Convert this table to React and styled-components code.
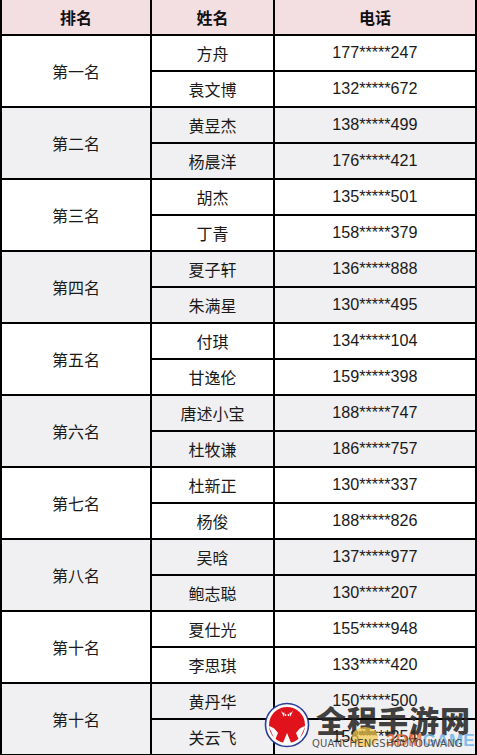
import React from "react";
import styled, { createGlobalStyle } from "styled-components";

const GlobalStyle = createGlobalStyle`
  html, body {
    margin: 0;
    padding: 0;
    background: #ffffff;
  }
  body {
    font-family: "Noto Sans CJK SC", "Noto Sans", sans-serif;
  }
`;

const Page = styled.div`
  position: relative;
  width: 477px;
  height: 755px;
  overflow: hidden;
`;

const Table = styled.div`
  display: grid;
  grid-template-columns: 148px 121px 200px;
  grid-auto-rows: 34px;
  gap: 2px;
  padding: 0 2px 2px;
  background: #000;
`;

const HeadCell = styled.div`
  display: flex;
  align-items: center;
  justify-content: center;
  background: #f3dee2;
  font-family: "Noto Sans CJK SC", sans-serif;
  font-weight: 700;
  font-size: 16px;
  color: #111;
`;

const Cell = styled.div`
  display: flex;
  align-items: center;
  justify-content: center;
  background: ${(p) => (p.$shade ? "#f0eff1" : "#ffffff")};
  font-family: "Noto Sans CJK SC", sans-serif;
  font-size: 16px;
  color: #1a1a1a;
`;

const RankCell = styled(Cell)`
  grid-row: span 2;
`;

const Phone = styled.span`
  display: inline-block;
  font-family: "Liberation Sans", Arial, sans-serif;
  font-size: 17px;
  color: #1a1a1a;
  transform: scaleX(0.95);
`;

const Watermark = styled.div`
  position: absolute;
  left: 262px;
  top: 700px;
  width: 215px;
  height: 55px;
  pointer-events: none;
`;

const Logo = styled.svg`
  position: absolute;
  left: 2px;
  top: 2px;
`;

const Brand = styled.div`
  position: absolute;
  left: 54px;
  top: 0px;
  font-family: "Noto Sans CJK SC", sans-serif;
  font-weight: 900;
  font-size: 30px;
  letter-spacing: 1px;
  color: rgba(40, 40, 40, 0.9);
  line-height: 38px;
`;

const Pinyin = styled.div`
  position: absolute;
  left: 50px;
  top: 38px;
  font-family: "DejaVu Sans", sans-serif;
  font-size: 10px;
  letter-spacing: 0.2px;
  color: rgba(50, 50, 50, 0.85);
`;

const Game = styled.div`
  position: absolute;
  left: 124px;
  top: 31px;
  font-family: "Liberation Sans", Arial, sans-serif;
  font-weight: 700;
  font-size: 17px;
  letter-spacing: 0.3px;
  color: rgba(100, 175, 230, 0.8);
  span {
    color: rgba(235, 105, 55, 0.8);
  }
`;

const Blob = styled.div`
  position: absolute;
  left: 90px;
  top: 27px;
  width: 26px;
  height: 20px;
  border-radius: 50%;
  background: rgba(245, 200, 70, 0.7);
`;

const groups = [
  ["第一名", [["方舟", "177*****247"], ["袁文博", "132*****672"]]],
  ["第二名", [["黄昱杰", "138*****499"], ["杨晨洋", "176*****421"]]],
  ["第三名", [["胡杰", "135*****501"], ["丁青", "158*****379"]]],
  ["第四名", [["夏子轩", "136*****888"], ["朱满星", "130*****495"]]],
  ["第五名", [["付琪", "134*****104"], ["甘逸伦", "159*****398"]]],
  ["第六名", [["唐述小宝", "188*****747"], ["杜牧谦", "186*****757"]]],
  ["第七名", [["杜新正", "130*****337"], ["杨俊", "188*****826"]]],
  ["第八名", [["吴晗", "137*****977"], ["鲍志聪", "130*****207"]]],
  ["第十名", [["夏仕光", "155*****948"], ["李思琪", "133*****420"]]],
  ["第十名", [["黄丹华", "150*****500"], ["关云飞", "158*****254"]]],
];

const LogoMark = () => (
  <Logo width="46" height="46" viewBox="0 0 46 46">
    <circle cx="23" cy="23" r="21.5" fill="#fff" stroke="#2a3e9c" strokeWidth="1.6" />
    <circle cx="23" cy="23" r="18" fill="#e0121c" />
    <path d="M23 31 L18.5 42 L27.5 42 Z" fill="#fff" />
    <path d="M15 5 Q18 12 20.5 10.5 L20 15 Z" fill="#fff" />
    <path d="M31 5 Q28 12 25.5 10.5 L26 15 Z" fill="#fff" />
    <path d="M4.5 24 Q10 25 14 31 L11 38 Z" fill="#fff" />
    <path d="M41.5 24 Q36 25 32 31 L35 38 Z" fill="#fff" />
    <circle cx="21.5" cy="13" r="0.9" fill="#fff" />
    <circle cx="24.5" cy="13" r="0.9" fill="#fff" />
  </Logo>
);

export default function App() {
  return (
    <>
      <GlobalStyle />
      <Page>
        <Table>
          <HeadCell>排名</HeadCell>
          <HeadCell>姓名</HeadCell>
          <HeadCell>电话</HeadCell>
          {groups.map(([rank, rows], i) => {
            const shade = i % 2 === 1;
            return (
              <React.Fragment key={i}>
                <RankCell $shade={shade}>{rank}</RankCell>
                <Cell $shade={shade}>{rows[0][0]}</Cell>
                <Cell $shade={shade}>
                  <Phone>{rows[0][1]}</Phone>
                </Cell>
                <Cell $shade={shade}>{rows[1][0]}</Cell>
                <Cell $shade={shade}>
                  <Phone>{rows[1][1]}</Phone>
                </Cell>
              </React.Fragment>
            );
          })}
        </Table>
        <Watermark>
          <LogoMark />
          <Brand>全程手游网</Brand>
          <Blob />
          <Game>
            <span>3DM</span>GAME
          </Game>
          <Pinyin>QUANCHENGSHOUYOUWANG</Pinyin>
        </Watermark>
      </Page>
    </>
  );
}
